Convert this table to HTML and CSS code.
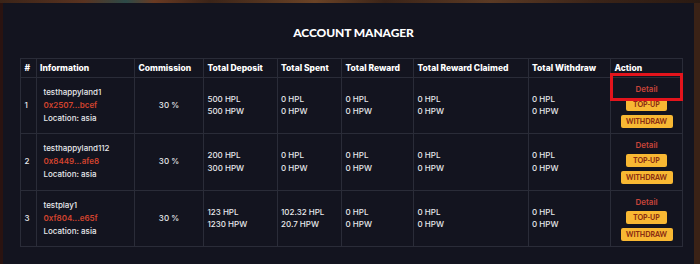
FILE: index.html
```html
<!DOCTYPE html>
<html>
<head>
<meta charset="utf-8">
<link rel="stylesheet" href="styles.css">
</head>
<body>
<div class="frame">
  <div class="panel">
    <h1 class="title">ACCOUNT MANAGER</h1>
    <div class="table-wrap">
      <table class="grid">
        <colgroup>
          <col class="c-num"><col class="c-info"><col class="c-comm"><col class="c-dep"><col class="c-spent"><col class="c-rew"><col class="c-claim"><col class="c-with"><col class="c-act">
        </colgroup>
        <thead>
          <tr>
            <th>#</th><th>Information</th><th>Commission</th><th>Total Deposit</th><th>Total Spent</th><th>Total Reward</th><th>Total Reward Claimed</th><th>Total Withdraw</th><th>Action</th>
          </tr>
        </thead>
        <tbody>
          <tr>
            <td>1</td>
            <td class="info"><div>testhappyland1</div><div class="addr">0x2507...bcef</div><div>Location: asia</div></td>
            <td class="center">30 %</td>
            <td><div>500 HPL</div><div>500 HPW</div></td>
            <td><div>0 HPL</div><div>0 HPW</div></td>
            <td><div>0 HPL</div><div>0 HPW</div></td>
            <td><div>0 HPL</div><div>0 HPW</div></td>
            <td><div>0 HPL</div><div>0 HPW</div></td>
            <td class="action"><div class="actions"><span class="detail">Detail</span><span class="btn btn-top">TOP-UP</span><span class="btn btn-wd">WITHDRAW</span></div></td>
          </tr>
          <tr>
            <td>2</td>
            <td class="info"><div>testhappyland112</div><div class="addr">0x8449...afe8</div><div>Location: asia</div></td>
            <td class="center">30 %</td>
            <td><div>200 HPL</div><div>300 HPW</div></td>
            <td><div>0 HPL</div><div>0 HPW</div></td>
            <td><div>0 HPL</div><div>0 HPW</div></td>
            <td><div>0 HPL</div><div>0 HPW</div></td>
            <td><div>0 HPL</div><div>0 HPW</div></td>
            <td class="action"><div class="actions"><span class="detail">Detail</span><span class="btn btn-top">TOP-UP</span><span class="btn btn-wd">WITHDRAW</span></div></td>
          </tr>
          <tr>
            <td>3</td>
            <td class="info"><div>testplay1</div><div class="addr">0xf804...e65f</div><div>Location: asia</div></td>
            <td class="center">30 %</td>
            <td><div>123 HPL</div><div>1230 HPW</div></td>
            <td><div>102.32 HPL</div><div>20.7 HPW</div></td>
            <td><div>0 HPL</div><div>0 HPW</div></td>
            <td><div>0 HPL</div><div>0 HPW</div></td>
            <td><div>0 HPL</div><div>0 HPW</div></td>
            <td class="action"><div class="actions"><span class="detail">Detail</span><span class="btn btn-top">TOP-UP</span><span class="btn btn-wd">WITHDRAW</span></div></td>
          </tr>
        </tbody>
      </table>
      <div class="highlight"></div>
    </div>
  </div>
</div>
</body>
</html>
```
FILE: styles.css
```css
* { box-sizing: border-box; }
html, body { margin: 0; padding: 0; }
body {
  width: 700px;
  height: 264px;
  overflow: hidden;
  background: #3a2216;
  font-family: Inter, "Noto Sans", sans-serif;
}
.frame {
  height: 264px;
  padding: 3px 6px 0 3px;
  background:
    linear-gradient(90deg, #3b2418 0%, #5a3320 12%, #2c4a48 18%, #6a3a22 22%, #3b2418 30%, #6b4326 45%, #3b2418 55%, #5b3a24 70%, #3b2418 85%, #2a1a12 100%) top left / 100% 3px no-repeat,
    linear-gradient(90deg, #2a1310 0, #2a1310 3px, transparent 3px, transparent 694px, #3a2216 694px);
}
.panel {
  height: 261px;
  background: #13141f;
  padding: 22px 12px 0 17px;
}
.title {
  margin: 0 0 17px 0;
  height: 16px;
  line-height: 16px;
  text-align: center;
  padding-left: 5px;
  font-family: Lato, sans-serif;
  font-weight: 900;
  font-size: 12px;
  color: #ffffff;
  letter-spacing: -0.1px;
}
.table-wrap {
  position: relative;
  width: 662px;
}
.grid {
  width: 662px;
  table-layout: fixed;
  border-collapse: collapse;
  color: #e8e9ec;
  font-size: 8px;
  font-weight: 500;
  line-height: 12.7px;
}
.c-num { width: 15.5px; }
.c-info { width: 98.5px; }
.c-comm { width: 69px; }
.c-dep { width: 73.5px; }
.c-spent { width: 64.5px; }
.c-rew { width: 72px; }
.c-claim { width: 114.5px; }
.c-with { width: 82.5px; }
.c-act { width: 72px; }
.grid th, .grid td {
  border: 1px solid #2a2c38;
  padding: 0 3.5px;
  vertical-align: middle;
  text-align: left;
}
.grid th {
  height: 18.5px;
  font-weight: 800;
  font-size: 8.5px;
  color: #ffffff;
  padding-top: 1px;
}
.grid td { height: 56.5px; }
.grid td.info { padding-left: 7px; line-height: 13px; }
.grid td.center { text-align: center; }
.addr { color: #d2432e; font-weight: 600; }
.grid td.action { text-align: center; padding: 0; }
.actions {
  display: flex;
  flex-direction: column;
  align-items: center;
  gap: 4px;
  padding-top: 1px;
}
.detail {
  color: #c9443a;
  font-weight: 600;
  font-size: 8px;
  line-height: 10px;
}
.btn {
  display: block;
  height: 13px;
  line-height: 13px;
  background: #f8b833;
  color: #8c2e12;
  border-radius: 2px;
  font-family: Lato, sans-serif;
  font-weight: 900;
  font-size: 7px;
  text-align: center;
}
.btn-top { width: 41px; }
.btn-wd { width: 52px; }
.highlight {
  position: absolute;
  left: 590px;
  top: 14.5px;
  width: 73px;
  height: 28px;
  border: 3.5px solid #e3141c;
}
```
